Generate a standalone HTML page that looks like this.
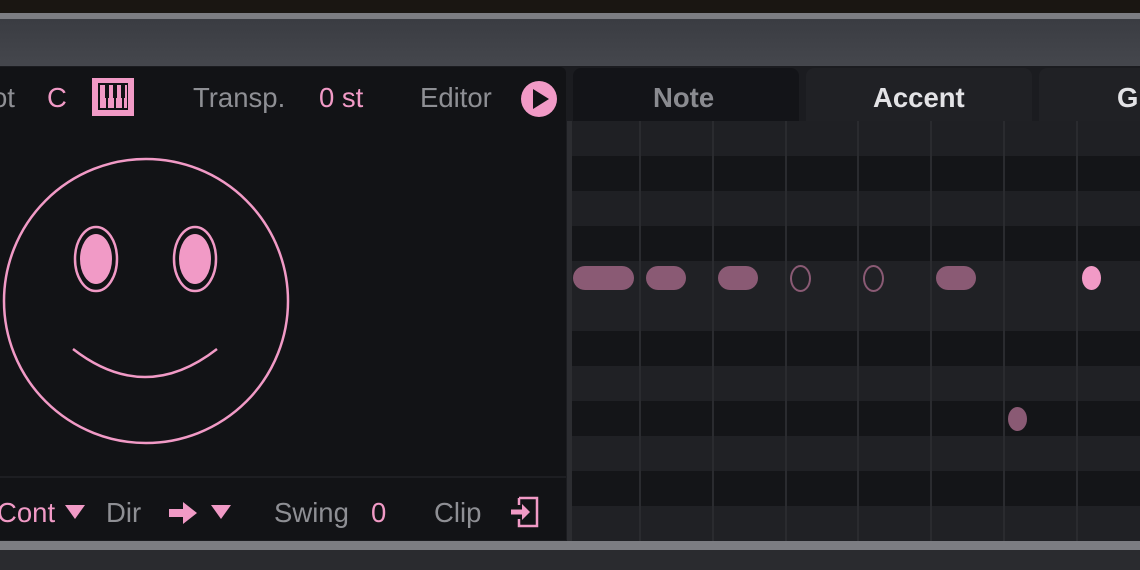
<!DOCTYPE html>
<html><head><style>
body{margin:0;width:1140px;height:570px;overflow:hidden;background:#2a2b2f;font-family:"Liberation Sans",sans-serif;position:relative}
.a{position:absolute}
.t{position:absolute;font-size:27.5px;color:#8e8f94;white-space:nowrap}
.p{color:#f19ac6}
</style></head><body>
<div class="a" style="left:0;top:0;width:1140px;height:13px;background:#1a1612"></div>
<div class="a" style="left:0;top:13px;width:1140px;height:6px;background:#7c7d82"></div>
<div class="a" style="left:0;top:19px;width:1140px;height:48px;background:linear-gradient(#3a3c42,#45474d)"></div>
<div class="a" style="left:0;top:66px;width:1140px;height:476px;background:#1b1c20"></div>
<div class="a" style="left:0;top:67px;width:566px;height:473px;background:#121316;border-radius:0 6px 0 0"></div>
<div class="a" style="left:0;top:476px;width:566px;height:2px;background:#1d1e22"></div>
<div class="t" style="left:-8px;top:82px;">ot</div>
<div class="t p" style="left:47px;top:82px;">C</div>
<div class="a" style="left:92px;top:78px;width:42px;height:38px;background:#f19ac6"></div>
<svg class="a" style="left:92px;top:78px" width="42" height="38"><rect x="6" y="5" width="30" height="27" fill="#121316"/><rect x="8" y="7" width="6" height="23" fill="#f19ac6"/><rect x="16" y="7" width="6" height="23" fill="#f19ac6"/><rect x="24" y="7" width="6" height="23" fill="#f19ac6"/><rect x="32" y="7" width="3" height="23" fill="#f19ac6"/><rect x="13" y="7" width="4" height="13" fill="#121316"/><rect x="21" y="7" width="4" height="13" fill="#121316"/><rect x="29" y="7" width="4" height="13" fill="#121316"/></svg>
<div class="t" style="left:193px;top:82px;">Transp.</div>
<div class="t p" style="left:319px;top:82px;">0 st</div>
<div class="t" style="left:420px;top:82px;">Editor</div>
<svg class="a" style="left:520px;top:80px" width="38" height="38"><circle cx="19" cy="19" r="18" fill="#f19ac6"/><path d="M13 9 L29 19 L13 29Z" fill="#121316"/></svg>
<svg class="a" style="left:0;top:150px" width="300" height="300" fill="none" stroke="#f19ac6" stroke-width="2.5">
<circle cx="146" cy="151" r="142"/>
<ellipse cx="96" cy="109" rx="21" ry="32"/><ellipse cx="96" cy="109" rx="16" ry="25" fill="#f19ac6" stroke="none"/>
<ellipse cx="195" cy="109" rx="21" ry="32"/><ellipse cx="195" cy="109" rx="16" ry="25" fill="#f19ac6" stroke="none"/>
<path d="M73 199 Q145 255 217 199"/>
</svg>
<div class="t p" style="left:-3px;top:497px;">Cont</div>
<svg class="a" style="left:64px;top:504px" width="22" height="16"><path d="M1 1 H21 L11 15Z" fill="#f19ac6"/></svg>
<div class="t" style="left:106px;top:497px;">Dir</div>
<svg class="a" style="left:167px;top:500px" width="32" height="26"><path d="M2 9 H16 V2 L30 13 L16 24 V17 H2Z" fill="#f19ac6"/></svg>
<svg class="a" style="left:210px;top:504px" width="22" height="16"><path d="M1 1 H21 L11 15Z" fill="#f19ac6"/></svg>
<div class="t" style="left:274px;top:497px;">Swing</div>
<div class="t p" style="left:371px;top:497px;">0</div>
<div class="t" style="left:434px;top:497px;">Clip</div>
<svg class="a" style="left:509px;top:495px" width="34" height="34" fill="none" stroke="#f19ac6" stroke-width="2.5"><path d="M10 3 H28 V31 H10 V24"/><path d="M10 10 V3"/><path d="M2 17 H14" stroke-width="5"/><path d="M13 9 L21 17 L13 25Z" fill="#f19ac6" stroke="none"/></svg>
<div class="a" style="left:573px;top:68px;width:226px;height:53px;background:#131418;border-radius:8px 8px 0 0"></div>
<div class="a" style="left:806px;top:68px;width:226px;height:53px;background:#202125;border-radius:8px 8px 0 0"></div>
<div class="a" style="left:1039px;top:68px;width:110px;height:53px;background:#202125;border-radius:8px 8px 0 0"></div>
<div class="t" style="left:653px;top:82px;font-weight:bold;color:#8a8b90">Note</div>
<div class="t" style="left:873px;top:82px;font-weight:bold;color:#e3e3e6">Accent</div>
<div class="t" style="left:1117px;top:82px;font-weight:bold;color:#e3e3e6">G</div>
<div class="a" style="left:567px;top:121px;width:573px;height:420px;background:repeating-linear-gradient(#1f2024 0 35px,#141518 35px 70px)"></div>
<div class="a" style="left:567px;top:261px;width:573px;height:70px;background:#202125"></div>
<div class="a" style="left:567px;top:331px;width:573px;height:210px;background:repeating-linear-gradient(#141518 0 35px,#202125 35px 70px)"></div>
<div class="a" style="left:567px;top:121px;width:5px;height:420px;background:#2c2d31"></div>
<div class="a" style="left:639px;top:121px;width:2px;height:420px;background:#2a2b2f"></div>
<div class="a" style="left:712px;top:121px;width:2px;height:420px;background:#2a2b2f"></div>
<div class="a" style="left:785px;top:121px;width:2px;height:420px;background:#2a2b2f"></div>
<div class="a" style="left:857px;top:121px;width:2px;height:420px;background:#2a2b2f"></div>
<div class="a" style="left:930px;top:121px;width:2px;height:420px;background:#2a2b2f"></div>
<div class="a" style="left:1003px;top:121px;width:2px;height:420px;background:#2a2b2f"></div>
<div class="a" style="left:1076px;top:121px;width:2px;height:420px;background:#2a2b2f"></div>
<div class="a" style="left:573px;top:266px;width:61px;height:24px;border-radius:12px;background:#8a5a74"></div>
<div class="a" style="left:646px;top:266px;width:40px;height:24px;border-radius:12px;background:#8a5a74"></div>
<div class="a" style="left:718px;top:266px;width:40px;height:24px;border-radius:12px;background:#8a5a74"></div>
<div class="a" style="left:790px;top:265px;width:17px;height:23px;border-radius:50%;border:2px solid #8a5a74"></div>
<div class="a" style="left:863px;top:265px;width:17px;height:23px;border-radius:50%;border:2px solid #8a5a74"></div>
<div class="a" style="left:936px;top:266px;width:40px;height:24px;border-radius:12px;background:#8a5a74"></div>
<div class="a" style="left:1082px;top:266px;width:19px;height:24px;border-radius:50%;background:#f19ac6"></div>
<div class="a" style="left:1008px;top:407px;width:19px;height:24px;border-radius:50%;background:#8a5a74"></div>
<div class="a" style="left:0;top:541px;width:1140px;height:9px;background:#7c7d82"></div>
</body></html>
